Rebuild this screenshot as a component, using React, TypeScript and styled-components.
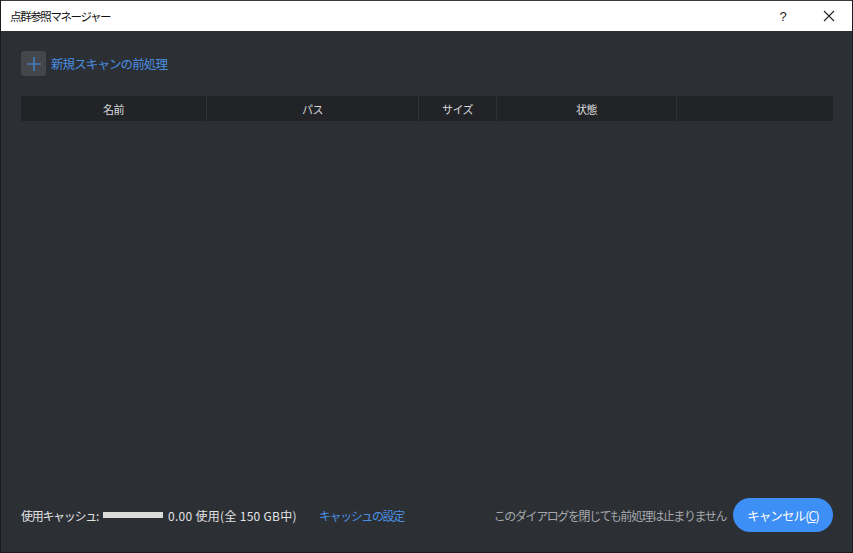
import { createGlobalStyle } from "styled-components";
import styled from "styled-components";

const GlobalStyle = createGlobalStyle`
  html, body {
    margin: 0;
    padding: 0;
    background: #2c2f34;
  }
  body {
    font-family: "Noto Sans CJK JP", "Noto Sans", "Liberation Sans", sans-serif;
  }
`;

const columns = [
    { label: "名前", width: 186 },
    { label: "パス", width: 212 },
    { label: "サイズ", width: 78 },
    { label: "状態", width: 180 },
    { label: "", width: 156 },
];

export default function App(): JSX.Element {
    return (
        <>
            <GlobalStyle />
            <Window>
                <TitleBar>
                    <Title>点群参照マネージャー</Title>
                    <TitleButtons>
                        <HelpButton>?</HelpButton>
                        <CloseButton>
                            <svg width="12" height="12" viewBox="0 0 12 12">
                                <path d="M1 1 L11 11 M11 1 L1 11" stroke="#222" strokeWidth="1.1" />
                            </svg>
                        </CloseButton>
                    </TitleButtons>
                </TitleBar>
                <Body>
                    <Toolbar>
                        <AddButton>
                            <svg width="14" height="14" viewBox="0 0 14 14">
                                <path d="M7 0 V14 M0 7 H14" stroke="#4a90e2" strokeWidth="1.2" />
                            </svg>
                        </AddButton>
                        <Link>新規スキャンの前処理</Link>
                    </Toolbar>
                    <HeaderRow>
                        {columns.map((col, i) => (
                            <HeaderCell key={i} $width={col.width} $last={i === columns.length - 1}>
                                {col.label}
                            </HeaderCell>
                        ))}
                    </HeaderRow>
                    <Spacer />
                    <Footer>
                        <CacheInfo>
                            <Label $spacing="-1.3px">使用キャッシュ:</Label>
                            <UsageBar />
                            <Label $spacing="0.3px">0.00 使用(全 150 GB中)</Label>
                            <FooterLink>キャッシュの設定</FooterLink>
                        </CacheInfo>
                        <Actions>
                            <Note>このダイアログを閉じても前処理は止まりません</Note>
                            <CancelButton>
                                キャンセル(<u>C</u>)
                            </CancelButton>
                        </Actions>
                    </Footer>
                </Body>
            </Window>
        </>
    );
}

const Window = styled.div`
  width: 853px;
  height: 553px;
  box-sizing: border-box;
  border: 1px solid #1b1c1f;
  border-top: none;
  display: flex;
  flex-direction: column;
  background: #2c2f34;
`;

const TitleBar = styled.div`
  height: 31px;
  flex: none;
  background: #ffffff;
  border-top: 1px solid #3a3a3a;
  box-sizing: border-box;
  display: flex;
  align-items: center;
  justify-content: space-between;
  padding-left: 9px;
`;

const Title = styled.span`
  font-size: 11.5px;
  letter-spacing: -1.4px;
  color: #111;
`;

const TitleButtons = styled.div`
  display: flex;
  align-items: center;
  height: 100%;
`;

const HelpButton = styled.div`
  width: 46px;
  text-align: center;
  font-family: "Liberation Sans", sans-serif;
  font-size: 13px;
  color: #222;
`;

const CloseButton = styled.div`
  width: 46px;
  height: 100%;
  display: flex;
  align-items: center;
  justify-content: center;
`;

const Body = styled.div`
  flex: 1;
  display: flex;
  flex-direction: column;
  padding: 20px 19px 20px 20px;
`;

const Toolbar = styled.div`
  display: flex;
  align-items: center;
  gap: 5px;
`;

const AddButton = styled.div`
  width: 25px;
  height: 25px;
  border-radius: 3px;
  background: #43464b;
  display: flex;
  align-items: center;
  justify-content: center;
`;

const Link = styled.span`
  font-size: 12.5px;
  letter-spacing: -0.9px;
  color: #4a90e2;
`;

const HeaderRow = styled.div`
  margin-top: 20px;
  height: 25px;
  display: flex;
  background: #212327;
`;

const HeaderCell = styled.div<{ $width: number; $last: boolean }>`
  width: ${(p) => p.$width}px;
  box-sizing: border-box;
  border-right: ${(p) => (p.$last ? "none" : "1px solid #2f3237")};
  display: flex;
  align-items: center;
  justify-content: center;
  font-size: 11px;
  letter-spacing: -0.5px;
  color: #d8d9db;
`;

const Spacer = styled.div`
  flex: 1;
`;

const Footer = styled.div`
  display: flex;
  align-items: center;
  justify-content: space-between;
`;

const CacheInfo = styled.div`
  display: flex;
  align-items: center;
  gap: 5px;
`;

const Label = styled.span<{ $spacing: string }>`
  font-size: 12px;
  letter-spacing: ${(p) => p.$spacing};
  color: #e2e3e5;
`;

const UsageBar = styled.div`
  width: 60px;
  height: 6px;
  background: #dcdcdc;
`;

const FooterLink = styled.span`
  margin-left: 17px;
  font-size: 12px;
  letter-spacing: -1.4px;
  color: #4a90e2;
`;

const Actions = styled.div`
  display: flex;
  align-items: center;
  gap: 7px;
`;

const Note = styled.span`
  font-size: 12px;
  letter-spacing: -1.4px;
  color: #a5a8ad;
`;

const CancelButton = styled.div`
  width: 100px;
  height: 34px;
  border-radius: 17px;
  background: #3d8ef5;
  color: #fff;
  font-size: 12.5px;
  letter-spacing: -0.9px;
  display: flex;
  align-items: center;
  justify-content: center;
`;
